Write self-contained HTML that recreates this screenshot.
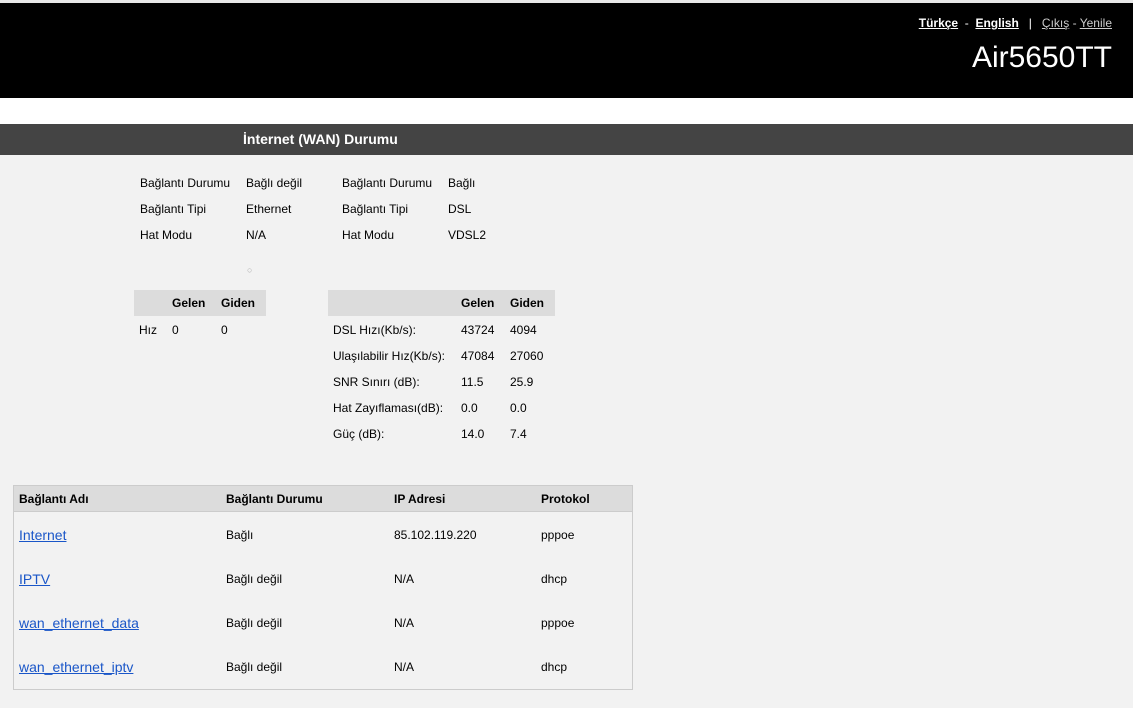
<!DOCTYPE html>
<html><head><meta charset="utf-8"><style>
*{margin:0;padding:0;box-sizing:border-box}
body{width:1133px;height:708px;overflow:hidden;background:#f2f2f2;font-family:"Liberation Sans",Arial,sans-serif;font-size:12px;color:#000;position:relative}
.a{position:absolute;white-space:nowrap}
#top{position:absolute;left:0;top:0;width:1133px;height:3px;background:#e8e8e8}
#hdr{position:absolute;left:0;top:3px;width:1133px;height:95px;background:#000}
#wh{position:absolute;left:0;top:98px;width:1133px;height:26px;background:#fff}
#bar{position:absolute;left:0;top:124px;width:1133px;height:31px;background:#444}
.hl{color:#fff;font-weight:bold;text-decoration:underline}
.gl{color:#ccc;text-decoration:underline}
.g{background:#dcdcdc}
.b{font-weight:bold}
a{color:#1a56c8;text-decoration:underline;font-size:14px}
</style></head><body>
<div id="top"></div><div id="hdr"></div><div id="wh"></div><div id="bar"></div>
<div class="a" style="right:21px;top:16px;font-size:12px;color:#fff"><span class="hl">Türkçe</span> &nbsp;- &nbsp;<span class="hl">English</span> &nbsp;&nbsp;| &nbsp;&nbsp;<span class="gl">Çıkış</span> <span style="color:#ccc">-</span> <span class="gl">Yenile</span></div>
<div class="a" style="right:21px;top:41px;font-size:30px;color:#fff">Air5650TT</div>
<div class="a b" style="left:243px;top:131px;font-size:14px;color:#fff">İnternet (WAN) Durumu</div>

<div class="a" style="left:140px;top:176px">Bağlantı Durumu</div><div class="a" style="left:246px;top:176px">Bağlı değil</div>
<div class="a" style="left:342px;top:176px">Bağlantı Durumu</div><div class="a" style="left:448px;top:176px">Bağlı</div>
<div class="a" style="left:140px;top:202px">Bağlantı Tipi</div><div class="a" style="left:246px;top:202px">Ethernet</div>
<div class="a" style="left:342px;top:202px">Bağlantı Tipi</div><div class="a" style="left:448px;top:202px">DSL</div>
<div class="a" style="left:140px;top:228px">Hat Modu</div><div class="a" style="left:246px;top:228px">N/A</div>
<div class="a" style="left:342px;top:228px">Hat Modu</div><div class="a" style="left:448px;top:228px">VDSL2</div>
<div class="a" style="left:247px;top:265px;font-size:9px;color:#aaa">○</div>

<div class="a g" style="left:134px;top:290px;width:132px;height:26px"></div>
<div class="a b" style="left:172px;top:296px">Gelen</div><div class="a b" style="left:221px;top:296px">Giden</div>
<div class="a" style="left:139px;top:323px">Hız</div><div class="a" style="left:172px;top:323px">0</div><div class="a" style="left:221px;top:323px">0</div>

<div class="a g" style="left:328px;top:290px;width:227px;height:26px"></div>
<div class="a b" style="left:461px;top:296px">Gelen</div><div class="a b" style="left:510px;top:296px">Giden</div>
<div class="a" style="left:333px;top:323px">DSL Hızı(Kb/s):</div><div class="a" style="left:461px;top:323px">43724</div><div class="a" style="left:510px;top:323px">4094</div>
<div class="a" style="left:333px;top:349px">Ulaşılabilir Hız(Kb/s):</div><div class="a" style="left:461px;top:349px">47084</div><div class="a" style="left:510px;top:349px">27060</div>
<div class="a" style="left:333px;top:375px">SNR Sınırı (dB):</div><div class="a" style="left:461px;top:375px">11.5</div><div class="a" style="left:510px;top:375px">25.9</div>
<div class="a" style="left:333px;top:401px">Hat Zayıflaması(dB):</div><div class="a" style="left:461px;top:401px">0.0</div><div class="a" style="left:510px;top:401px">0.0</div>
<div class="a" style="left:333px;top:427px">Güç (dB):</div><div class="a" style="left:461px;top:427px">14.0</div><div class="a" style="left:510px;top:427px">7.4</div>

<div class="a" style="left:13px;top:485px;width:620px;height:205px;border:1px solid #ccc;background:#f2f2f2"></div>
<div class="a g" style="left:14px;top:486px;width:618px;height:26px;border-bottom:1px solid #ccc"></div>
<div class="a b" style="left:19px;top:492px">Bağlantı Adı</div><div class="a b" style="left:226px;top:492px">Bağlantı Durumu</div><div class="a b" style="left:394px;top:492px">IP Adresi</div><div class="a b" style="left:541px;top:492px">Protokol</div>

<div class="a" style="left:19px;top:527px"><a>Internet</a></div><div class="a" style="left:226px;top:528px">Bağlı</div><div class="a" style="left:394px;top:528px">85.102.119.220</div><div class="a" style="left:541px;top:528px">pppoe</div>
<div class="a" style="left:19px;top:571px"><a>IPTV</a></div><div class="a" style="left:226px;top:572px">Bağlı değil</div><div class="a" style="left:394px;top:572px">N/A</div><div class="a" style="left:541px;top:572px">dhcp</div>
<div class="a" style="left:19px;top:615px"><a>wan_ethernet_data</a></div><div class="a" style="left:226px;top:616px">Bağlı değil</div><div class="a" style="left:394px;top:616px">N/A</div><div class="a" style="left:541px;top:616px">pppoe</div>
<div class="a" style="left:19px;top:659px"><a>wan_ethernet_iptv</a></div><div class="a" style="left:226px;top:660px">Bağlı değil</div><div class="a" style="left:394px;top:660px">N/A</div><div class="a" style="left:541px;top:660px">dhcp</div>
</body></html>
